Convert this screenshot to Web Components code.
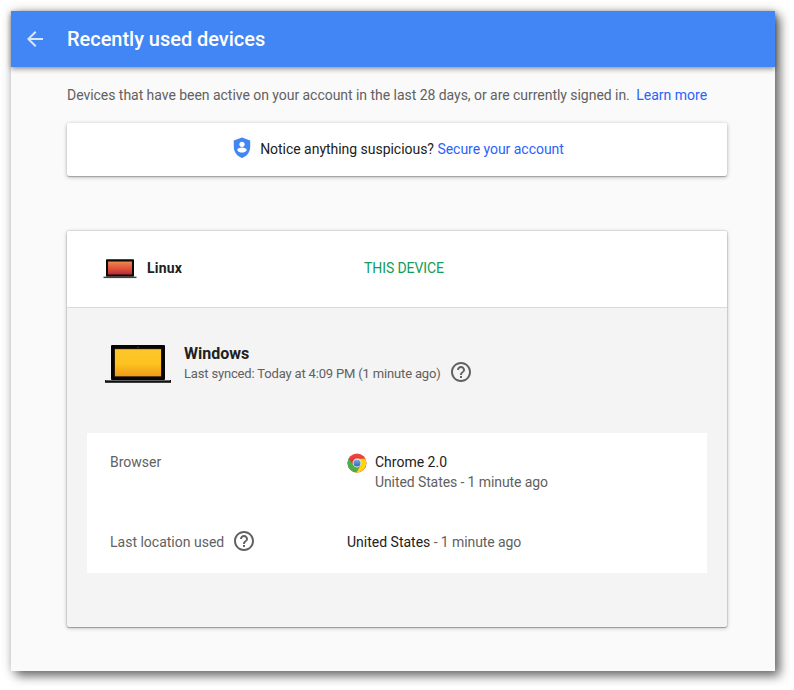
<!DOCTYPE html>
<html lang="en"><head><meta charset="utf-8"><title>Recently used devices</title>
<style>
body{display:flow-root;min-height:690px;margin:0;background:#fff;font:14px/20px Roboto,"Liberation Sans",sans-serif;color:#212121}
.link{color:#2962ff;text-decoration:none}
.muted{color:#616161;letter-spacing:-.095px}
page-intro span{letter-spacing:-.038px}
detail-row help-icon{margin:-3px 0 0 8px}
</style></head><body>
<devices-window>
<app-header slot="header">Recently used devices</app-header>
<page-intro><span>Devices that have been active on your account in the last 28 days, or are currently signed in.</span><a class="link">Learn more</a></page-intro>
<security-notice><span>Notice anything suspicious?</span><a class="link" slot="action">Secure your account</a></security-notice>
<device-card>
<device-row slot="current"><laptop-icon small></laptop-icon><span slot="name">Linux</span><span slot="status">THIS DEVICE</span></device-row>
<device-heading><laptop-icon></laptop-icon><span slot="name">Windows</span><span slot="sync">Last synced: Today at 4:09 PM (1 minute ago)</span><help-icon slot="help"></help-icon></device-heading>
<detail-panel>
<detail-row><span slot="label">Browser</span><chrome-icon slot="icon"></chrome-icon><span>Chrome 2.0</span><span class="muted" slot="more">United States - 1 minute ago</span></detail-row>
<detail-row><span slot="label">Last location used</span><help-icon slot="help"></help-icon><span>United States<span class="muted"> - 1 minute ago</span></span></detail-row>
</detail-panel>
</device-card>
</devices-window>
<script>
const define=(name,css,html)=>{
  const t=document.createElement('template');
  t.innerHTML='<style>'+css+'</style>'+html;
  customElements.define(name,class extends HTMLElement{
    constructor(){super();this.attachShadow({mode:'open'}).append(t.content.cloneNode(true));}
  });
};
define('devices-window',`:host{display:block;box-sizing:border-box;width:764px;height:660px;margin:11px;background:#fafafa;box-shadow:5px 5px 10px rgba(0,0,0,.55),0 0 10px rgba(0,0,0,.18)}
main{padding:18px 48px 0 56px}`,`<slot name="header"></slot><main><slot></slot></main>`);
define('app-header',`:host{display:flex;align-items:center;height:56px;background:#4285f4;color:#fff;font-size:20px;font-weight:500;letter-spacing:-.03px;box-shadow:0 2px 5px rgba(0,0,0,.42)}
svg{width:24px;height:24px;margin:0 20px 0 12px;opacity:.8}`,
`<svg viewBox="0 0 24 24"><path fill="#fff" d="M20 11H7.83l5.59-5.59L12 4l-8 8 8 8 1.41-1.41L7.83 13H20v-2z"/></svg><slot></slot>`);
define('page-intro',`:host{display:flex;gap:6.500px;color:#616161;white-space:nowrap}`,`<slot></slot>`);
define('security-notice',`:host{display:flex;box-sizing:border-box;width:660px;height:53px;padding-bottom:2px;margin-top:18px;align-items:center;justify-content:center;background:#fff;border-radius:2px;box-shadow:0 1px 4px rgba(0,0,0,.3),0 1px 1px rgba(0,0,0,.22);white-space:pre;letter-spacing:-.03px}
svg{width:24px;height:24px;margin:-1px 6px 0 0}`,
`<svg viewBox="0 0 24 24"><path fill="#4285f4" d="M12 1.500 3.800 4.600v6.200c0 5.200 3.500 9.800 8.200 11.200 4.700-1.400 8.200-6 8.200-11.200V4.600z"/><circle cx="12" cy="8.300" r="2.600" fill="#fff"/><path fill="#fff" d="M7.200 14.200c0-1.700 2.500-2.600 4.800-2.600s4.800.9 4.800 2.600c-1 1.500-2.700 2.400-4.800 2.400s-3.800-.9-4.800-2.400z"/></svg><slot></slot><span>&nbsp;</span><slot name="action"></slot>`);
define('device-card',`:host{display:block;box-sizing:border-box;width:660px;height:396px;margin-top:55px;background:#f4f4f4;border-radius:2px;box-shadow:0 0 0 1px rgba(0,0,0,.07),0 1px 4px rgba(0,0,0,.25),0 1px 1px rgba(0,0,0,.22)}`,`<slot name="current"></slot><slot></slot>`);
define('device-row',`:host{display:grid;grid-template-columns:34px 216px 1fr;box-sizing:border-box;height:77px;padding:27px 0 0 36px;background:#fff;border-bottom:1px solid #dadada;border-radius:2px 2px 0 0}
.name{font-weight:700;padding-left:10px;letter-spacing:.2px}.status{color:#0f9d58;padding-left:11px;letter-spacing:-.09px}`,
`<slot></slot><div class="name"><slot name="name"></slot></div><div class="status"><slot name="status"></slot></div>`);
define('laptop-icon',`:host{display:block;width:68px;height:41px}:host([small]){width:34px;height:22px}
svg{display:block;width:100%;height:100%}.little{display:none}:host([small]) .little{display:block}:host([small]) .big{display:none}`,
`<svg class="big" viewBox="0 0 68 41"><defs><linearGradient id="g" x2="0" y2="1"><stop stop-color="#fcc62b"/><stop offset=".55" stop-color="#fdc21f"/><stop offset="1" stop-color="#ef9a1a"/></linearGradient></defs><rect x="7" y="1" width="54" height="35" rx="1" fill="#050505"/><circle cx="34" cy="3.300" r=".6" fill="#666"/><rect x="10.500" y="4.700" width="47" height="28" fill="#4d3500"/><rect x="11" y="5.200" width="46" height="27" fill="url(#g)"/><rect x="1" y="36" width="66" height="2.800" fill="#111"/><rect x="2" y="36.300" width="64" height=".7" fill="#888"/></svg>
<svg class="little" viewBox="0 0 34 22"><defs><linearGradient id="g2" x2="0" y2="1"><stop stop-color="#f1874b"/><stop offset=".6" stop-color="#dc4d39"/><stop offset="1" stop-color="#b52c36"/></linearGradient></defs><rect x="3" y="1.300" width="28" height="17.500" rx=".7" fill="#090909"/><rect x="5" y="3.500" width="24" height="13" fill="url(#g2)"/><rect x=".5" y="18.600" width="33" height="1.500" fill="#444"/></svg>`);
define('help-icon',`:host{display:block;width:24px;height:24px}svg{display:block}`,`<svg width="24" height="24" viewBox="0 0 24 24"><path fill="#616161" d="M11 18h2v-2h-2v2zm1-16C6.480 2 2 6.480 2 12s4.480 10 10 10 10-4.480 10-10S17.520 2 12 2zm0 18c-4.410 0-8-3.590-8-8s3.590-8 8-8 8 3.590 8 8-3.590 8-8 8zm0-14c-2.210 0-4 1.790-4 4h2c0-1.100.9-2 2-2s2 .9 2 2c0 2-3 1.750-3 5h2c0-2.250 3-2.500 3-5 0-2.210-1.790-4-4-4z"/></svg>`);
define('device-heading',`:host{display:flex;box-sizing:border-box;height:125px;padding:36px 37px 0}
.text{margin-left:12px;white-space:nowrap}.name{font-size:16px;font-weight:700;line-height:20px}.sync{font-size:13px;color:#616161;letter-spacing:-.165px}.help{margin:16px 0 0 8px}`,
`<slot></slot><div class="text"><div class="name"><slot name="name"></slot></div><div class="sync"><slot name="sync"></slot></div></div><div class="help"><slot name="help"></slot></div>`);
define('detail-panel',`:host{display:block;box-sizing:border-box;height:140px;margin:0 20px;padding-top:19px;background:#fff}`,`<slot></slot>`);
define('detail-row',`:host{display:grid;grid-template-columns:237px 1fr;height:80px;padding-left:23px}
.label,.value{display:flex;align-items:flex-start}.label{color:#616161}.lines{display:grid;grid-auto-rows:20px;white-space:nowrap}`,
`<div class="label"><slot name="label"></slot><slot name="help"></slot></div><div class="value"><slot name="icon"></slot><div class="lines"><slot></slot><slot name="more"></slot></div></div>`);
define('chrome-icon',`:host{display:block;width:20px;height:20px;margin:1px 8px 0 0}svg{display:block}`,
`<svg width="20" height="20" viewBox="0 0 20 20"><defs><linearGradient id="r" x2="0" y2="1"><stop stop-color="#ee4a40"/><stop offset="1" stop-color="#c9211e"/></linearGradient><linearGradient id="b" x2="0" y2="1"><stop stop-color="#7cb0e4"/><stop offset="1" stop-color="#2868b4"/></linearGradient></defs><circle cx="10" cy="10" r="9.500" fill="url(#r)"/><path fill="#4cae48" d="M1.800 5.200A9.500 9.500 0 0 0 9.300 19.500L13.700 12.200 10 14.200 6.300 12.200z"/><path fill="#fdd50b" d="M18.300 5.800H10L13.700 12.200 9.300 19.500A9.500 9.500 0 0 0 18.300 5.800z"/><circle cx="10" cy="10" r="4.400" fill="#edf2f5"/><circle cx="10" cy="10" r="3.500" fill="url(#b)"/></svg>`);
</script>
</body></html>
